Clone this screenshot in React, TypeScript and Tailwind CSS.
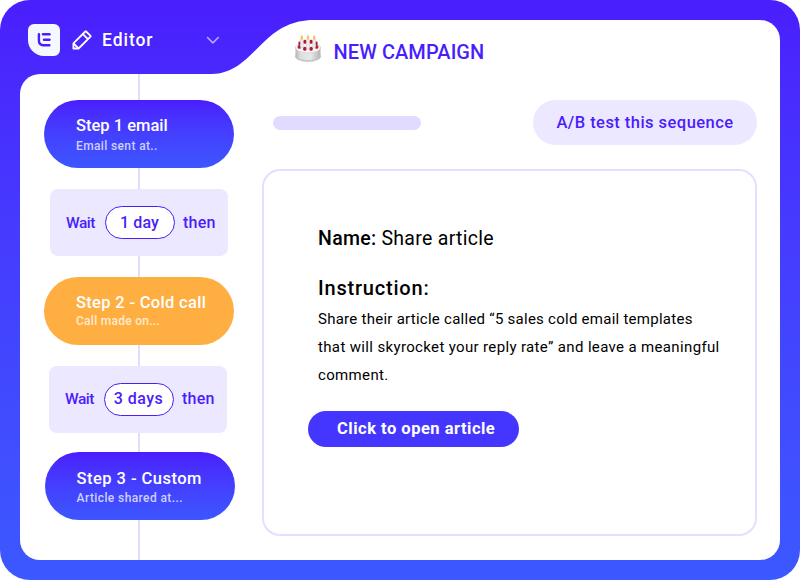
import type { ReactNode } from "react";

function Logo() {
  return (
    <div className="flex h-8 w-8 items-center justify-center rounded-[6px] rounded-bl-[16px] bg-[#f5f8ff]">
      <svg width="32" height="32" viewBox="0 0 32 32" fill="none" stroke="#4a1dfd" strokeWidth="2.4" strokeLinecap="round">
        <path d="M10.9 10.2V16.6Q10.9 21.2 15.4 21.2H21.4" />
        <path d="M15 10.3H21.5" />
        <path d="M16 15.7H21.5" />
      </svg>
    </div>
  );
}

function Pencil() {
  return (
    <svg width="20" height="20" viewBox="0 0 20 20" fill="none" stroke="#fff" strokeWidth="1.8" strokeLinejoin="round">
      <path d="M1.4 18.5V13.4L13.3 1.5Q13.7 1.1 14.1 1.5L18.5 5.8Q18.9 6.2 18.5 6.6L6.6 18.5Z" />
      <path d="M10.9 4.1L15.9 9.1M1.6 13.5L6.5 18.4" />
    </svg>
  );
}

function Cake() {
  return (
    <svg width="28" height="28" viewBox="0 0 28 28">
      <defs>
        <linearGradient id="side" x1="0" x2="1" y1="0" y2="0">
          <stop offset="0" stopColor="#b4b4b4" />
          <stop offset="0.2" stopColor="#dedede" />
          <stop offset="0.6" stopColor="#e8e8e8" />
          <stop offset="1" stopColor="#b4b4b4" />
        </linearGradient>
      </defs>
      <ellipse cx="14" cy="22.4" rx="12.9" ry="5.3" fill="#c4c4c4" />
      <path d="M1.5 13V21.6C1.5 27.6 26.5 27.6 26.5 21.6V13Z" fill="url(#side)" />
      <ellipse cx="14" cy="13.6" rx="12.5" ry="5.4" fill="#f4f4f4" stroke="#cfcfcf" strokeWidth="0.7" />
      <g fill="#b51736">
        <rect x="9.4" y="5.8" width="3" height="4" rx="1.4" />
        <rect x="15.6" y="5.8" width="3" height="4" rx="1.4" />
        <rect x="4.4" y="7.5" width="2.6" height="3.6" rx="1.2" />
        <rect x="21" y="7.5" width="2.6" height="3.6" rx="1.2" />
        <rect x="3.7" y="11" width="3.2" height="3.8" rx="1.5" />
        <rect x="9.2" y="12.8" width="3.2" height="4" rx="1.5" />
        <rect x="15.5" y="12.8" width="3.2" height="4" rx="1.5" />
        <rect x="21.1" y="11" width="3.2" height="3.8" rx="1.5" />
      </g>
      <g fill="#efefef" stroke="#bdbdbd" strokeWidth="0.5">
        <rect x="6.4" y="5.3" width="2.7" height="8.4" rx="0.6" />
        <rect x="12.65" y="5.3" width="2.7" height="9.6" rx="0.6" />
        <rect x="18.9" y="5.3" width="2.7" height="8.4" rx="0.6" />
      </g>
      <g fill="#f3c553">
        <path d="M7.8 0.8Q10.6 5.5 7.8 5.6Q5 5.5 7.8 0.8Z" />
        <path d="M14 0.6Q16.8 5.3 14 5.4Q11.2 5.3 14 0.6Z" />
        <path d="M20.2 0.8Q23 5.5 20.2 5.6Q17.4 5.5 20.2 0.8Z" />
      </g>
    </svg>
  );
}

function Step({ className, title, children }: { className: string; title: ReactNode; children: ReactNode }) {
  return (
    <div className={`relative flex h-[68px] w-[190px] flex-col rounded-[34px] pl-8 font-medium text-white ${className}`}>
      <div className="h-5 whitespace-nowrap text-[16.5px] leading-5">{title}</div>
      {children}
    </div>
  );
}

function Wait({ className, children }: { className: string; children: ReactNode }) {
  return (
    <div className={`relative flex h-[67px] w-[178px] items-center rounded-lg bg-[#ece8ff] pl-4 text-[16px] font-medium leading-5 text-[#4a1dfd] ${className}`}>
      <span className="w-[38.5px] text-[15.5px] tracking-[-0.5px]">Wait</span>
      <span className="flex h-[33px] w-[70px] items-center justify-center whitespace-nowrap rounded-full border border-[#4a1dfd] bg-white">
        {children}
      </span>
      <span className="ml-[8.5px] tracking-[0.25px]">then</span>
    </div>
  );
}

export default function App() {
  return (
    <div className="h-[580px] w-[800px] overflow-hidden bg-white font-[Roboto,sans-serif]">
      <div className="flex h-full w-full flex-col rounded-[30px] bg-linear-to-b from-[#4a1dfd] to-[#3c58ff] p-5">
        <header className="flex h-[54px] shrink-0">
          <div className="flex w-[192px] shrink-0 items-start pl-2 pt-1">
            <Logo />
            <div className="ml-3 mt-[6px] shrink-0">
              <Pencil />
            </div>
            <span className="ml-[10px] mt-[5px] w-[104px] shrink-0 text-[17.5px] font-medium leading-[22px] tracking-[0.95px] text-white">Editor</span>
            <svg className="mt-3 shrink-0" width="14" height="9" viewBox="0 0 14 9" fill="none" stroke="#b9a8fe" strokeWidth="1.6" strokeLinecap="round" strokeLinejoin="round">
              <path d="M1.5 1.5L6.9 6.9L12.3 1.5" />
            </svg>
          </div>
          <svg className="shrink-0" width="102" height="54" viewBox="0 0 102 54">
            <path d="M0 54C24 54 38 35 54 20C66 9 80 0 102 0V54Z" fill="#fff" />
          </svg>
          <div className="flex flex-1 rounded-tr-[20px] bg-white">
            <div className="relative -ml-5 mt-[14px]">
              <Cake />
            </div>
            <div className="pl-[11.5px] pt-[19px] text-[20px] font-medium leading-[26px] tracking-[0.08px] text-[#4a1dfd]">
              NEW CAMPAIGN
            </div>
          </div>
        </header>
        <main className="flex flex-1 rounded-[20px] rounded-tr-none bg-white">
          <aside className="relative flex w-[242px] shrink-0 flex-col pl-6 pt-[26px]">
            <div className="absolute bottom-0 left-[118px] top-0 w-[2px] bg-[#e3dcff]" />
            <Step className="bg-linear-to-b from-[#4a1dfd] to-[#3c56ff] pt-4" title="Step 1 email">
              <div className="mt-[3px] text-[12px] leading-[14px] tracking-[0.37px] text-white/75">Email sent at..</div>
            </Step>
            <Wait className="ml-[6px] mt-[21px]">
              <span className="tracking-[0.15px]">1 day</span>
            </Wait>
            <Step className="mt-[21px] bg-[#ffae41] pt-4" title={<span className="tracking-[0.32px]">Step 2 - Cold call</span>}>
              <div className="mt-[1px] text-[12px] leading-[14px] tracking-[0.27px] text-white/75">Call made on...</div>
            </Step>
            <Wait className="ml-[5px] mt-[20.5px]">
              <span className="tracking-[0.5px]">3 days</span>
            </Wait>
            <Step
              className="ml-[0.6px] mt-[19.5px] bg-linear-to-b from-[#4a1dfd] to-[#3c56ff] pt-[17px]"
              title={<span className="tracking-[0.46px]">Step 3 - Custom</span>}
            >
              <div className="mt-[2px] text-[12px] leading-[14px] tracking-[0.4px] text-white/75">Article shared at...</div>
            </Step>
          </aside>
          <section className="flex w-[495px] flex-col pt-[26px]">
            <div className="flex h-[45px] items-center justify-between pl-[11px]">
              <div className="h-[14px] w-[148px] rounded-full bg-[#e1dcff]" />
              <div className="flex h-[45px] w-[224px] items-center justify-center whitespace-nowrap rounded-full bg-[#ece8ff] pt-[2px] text-[16.5px] font-medium tracking-[0.46px] text-[#4a1dfd]">
                A/B test this sequence
              </div>
            </div>
            <div className="mt-6 flex h-[367px] flex-col items-start rounded-[18px] border-2 border-[#e3dfff] pl-[54px] pt-[56px] text-black">
              <p className="text-[19.5px] leading-[24px] tracking-[0.3px]">
                <span className="font-medium">Name:</span>
                <span className="ml-[5px]">Share article</span>
              </p>
              <p className="mt-[25px] text-[20px] font-medium leading-[24px] tracking-[0.8px]">Instruction:</p>
              <div className="mt-[5px] whitespace-nowrap text-[15px] leading-7">
                <p className="tracking-[0.26px]">Share their article called “5 sales cold email templates</p>
                <p className="tracking-[0.35px]">that will skyrocket your reply rate” and leave a meaningful</p>
                <p className="tracking-[0.35px]">comment.</p>
              </div>
              <div className="-ml-[10px] mt-[22px] flex h-9 w-[211px] items-center whitespace-nowrap rounded-full bg-[#4536ff] pl-[29px] text-[16.5px] font-bold tracking-[0.5px] text-white">
                Click to open article
              </div>
            </div>
          </section>
        </main>
      </div>
    </div>
  );
}
